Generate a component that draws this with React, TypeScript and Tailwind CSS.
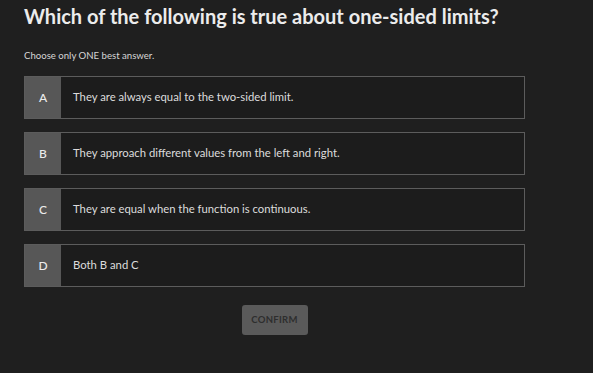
import React, { useState } from 'react';

const options = [
  { key: 'A', text: 'They are always equal to the two-sided limit.' },
  { key: 'B', text: 'They approach different values from the left and right.' },
  { key: 'C', text: 'They are equal when the function is continuous.' },
  { key: 'D', text: 'Both B and C' },
];

export default function App() {
  const [selected, setSelected] = useState<string | null>(null);

  return (
    <div className="min-h-screen w-full bg-[#1f1f1f] px-6 pt-[2px] font-['Lato',sans-serif] text-[#e6e6e6]">
      <h1 className="text-[20px] font-bold leading-[28px] text-[#ececec]">
        Which of the following is true about one-sided limits?
      </h1>

      <p className="mt-[20px] text-[9.6px] leading-[12px] text-[#d6d6d6]">Choose only ONE best answer.</p>

      <div className="mt-[14px] flex w-[501px] flex-col gap-[13px]">
        {options.map((o) => (
          <button
            key={o.key}
            onClick={() => setSelected(o.key)}
            className="flex h-[43px] w-full items-stretch border border-[#5c5c5c] bg-[#1c1c1c] text-left"
          >
            <span className="flex w-[36px] shrink-0 items-center justify-center bg-[#575757] text-[12px] font-medium text-[#ececec]">
              {o.key}
            </span>
            <span className="flex items-center pl-3 text-[11.3px] text-[#dcdcdc]">{o.text}</span>
          </button>
        ))}
      </div>

      <div className="mt-[18px] flex w-[501px] justify-center">
        <button
          onClick={() => selected && setSelected(null)}
          className="flex h-[30px] w-[66px] items-center justify-center rounded-[3px] bg-[#5a5a5a]"
        >
          <span className="text-[9.5px] font-bold tracking-[0.3px] text-[#2e2e2e]">CONFIRM</span>
        </button>
      </div>
    </div>
  );
}
